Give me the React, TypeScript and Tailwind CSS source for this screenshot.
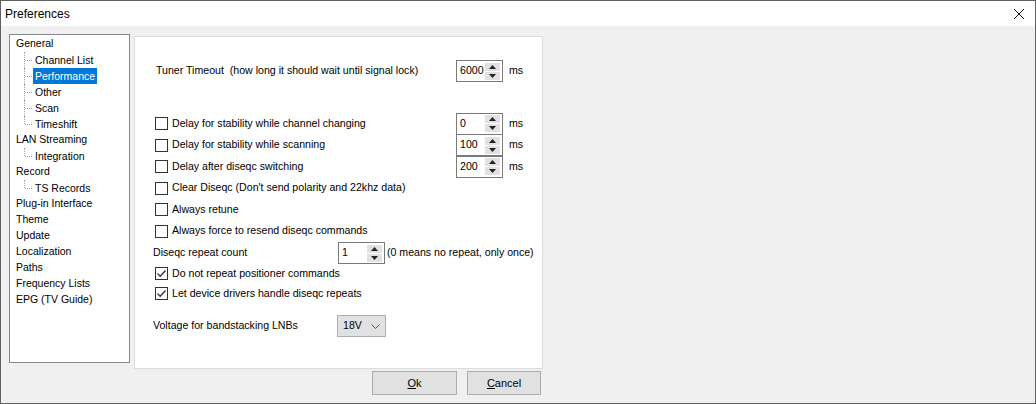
import React from "react";

const tree: { label: string; child?: boolean; last?: boolean; selected?: boolean }[] = [
  { label: "General" },
  { label: "Channel List", child: true },
  { label: "Performance", child: true, selected: true },
  { label: "Other", child: true },
  { label: "Scan", child: true },
  { label: "Timeshift", child: true, last: true },
  { label: "LAN Streaming" },
  { label: "Integration", child: true, last: true },
  { label: "Record" },
  { label: "TS Records", child: true, last: true },
  { label: "Plug-in Interface" },
  { label: "Theme" },
  { label: "Update" },
  { label: "Localization" },
  { label: "Paths" },
  { label: "Frequency Lists" },
  { label: "EPG (TV Guide)" },
];

function SpinArrows() {
  return (
    <div className="flex flex-col gap-px mr-[2px]">
      <div className="w-[15px] h-[8px] bg-[#e1e1e1] flex items-center justify-center">
        <svg width="7" height="4" viewBox="0 0 7 4">
          <path d="M0 4 L3.5 0 L7 4 Z" fill="#222" />
        </svg>
      </div>
      <div className="w-[15px] h-[8px] bg-[#e1e1e1] flex items-center justify-center">
        <svg width="7" height="4" viewBox="0 0 7 4">
          <path d="M0 0 L3.5 4 L7 0 Z" fill="#222" />
        </svg>
      </div>
    </div>
  );
}

function Spin({ value }: { value: string }) {
  return (
    <div className="w-[47px] h-[22px] bg-white border border-[#7a7a7a] flex items-center justify-between shrink-0">
      <span className="pl-[3px]">{value}</span>
      <SpinArrows />
    </div>
  );
}

function Check({ checked }: { checked?: boolean }) {
  return (
    <div className="w-[13px] h-[13px] border border-[#333] bg-white shrink-0 flex items-center justify-center">
      {checked && (
        <svg width="11" height="11" viewBox="0 0 11 11">
          <path d="M1.5 5.5 L4.2 8.2 L9.5 2.5" fill="none" stroke="#333" strokeWidth="1.3" />
        </svg>
      )}
    </div>
  );
}

function CheckRow({ label, checked }: { label: string; checked?: boolean }) {
  return (
    <div className="flex items-center pl-[20px]">
      <Check checked={checked} />
      <span className="ml-[4px]">{label}</span>
    </div>
  );
}

export default function App() {
  return (
    <div
      className="w-[1036px] h-[404px] border border-[#5f5f5f] flex flex-col bg-[#f0f0f0] text-black overflow-hidden"
      style={{ fontFamily: '"Liberation Sans", Arial, sans-serif' }}
    >
      <div className="h-[25px] bg-white flex items-center justify-between shrink-0">
        <span className="pl-[4px] text-[12px]">Preferences</span>
        <svg width="12" height="12" viewBox="0 0 12 12" className="mr-[10px]">
          <path d="M1 1 L11 11 M11 1 L1 11" stroke="#111" strokeWidth="1" />
        </svg>
      </div>

      <div className="flex pl-[8px] pt-[8px]">
        <div className="w-[121px] h-[329px] bg-white border border-[#828790] pt-px text-[10.5px]">
          {tree.map((t) => (
            <div key={t.label} className="h-[16px] flex items-center">
              {t.child ? (
                <>
                  <div className="relative w-[23px] h-[16px] shrink-0">
                    <div
                      className={
                        "absolute left-[14px] top-0 border-l border-dotted border-[#a0a0a0] " +
                        (t.last ? "h-[8px]" : "h-[16px]")
                      }
                    />
                    <div className="absolute left-[15px] top-[8px] w-[7px] border-t border-dotted border-[#a0a0a0]" />
                  </div>
                  <span
                    className={
                      "h-[16px] leading-[16px] px-[2px] " +
                      (t.selected ? "bg-[#0078d7] text-white" : "")
                    }
                  >
                    {t.label}
                  </span>
                </>
              ) : (
                <span className="pl-[6px]">{t.label}</span>
              )}
            </div>
          ))}
        </div>

        <div className="ml-[4px] mt-[2px] flex flex-col">
          <div className="w-[409px] h-[333px] bg-white border border-[#dcdcdc] text-[10.6px] pt-[23px]">
            <div className="h-[22px] flex items-center">
              <span className="pl-[21px] w-[321px] shrink-0">Tuner Timeout&nbsp; (how long it should wait until signal lock)</span>
              <Spin value="6000" />
              <span className="ml-[6px]">ms</span>
            </div>

            <div className="mt-[31px]">
              {[
                ["Delay for stability while channel changing", "0"],
                ["Delay for stability while scanning", "100"],
                ["Delay after diseqc switching", "200"],
              ].map(([label, v]) => (
                <div key={label} className="h-[21.5px] flex items-center">
                  <div className="w-[321px] shrink-0">
                    <CheckRow label={label} />
                  </div>
                  <Spin value={v} />
                  <span className="ml-[6px]">ms</span>
                </div>
              ))}
              {[
                "Clear Diseqc (Don't send polarity and 22khz data)",
                "Always retune",
                "Always force to resend diseqc commands",
              ].map((label) => (
                <div key={label} className="h-[21.5px] flex items-center">
                  <CheckRow label={label} />
                </div>
              ))}
            </div>

            <div className="h-[22px] flex items-center">
              <span className="pl-[18px] w-[203px] shrink-0">Diseqc repeat count</span>
              <Spin value="1" />
              <span className="ml-[2px]">(0 means no repeat, only once)</span>
            </div>

            <div className="h-[20px] flex items-center">
              <CheckRow label="Do not repeat positioner commands" checked />
            </div>
            <div className="h-[20px] flex items-center">
              <CheckRow label="Let device drivers handle diseqc repeats" checked />
            </div>

            <div className="h-[22px] flex items-center mt-[11px]">
              <span className="pl-[18px] w-[202px] shrink-0">Voltage for bandstacking LNBs</span>
              <div className="w-[49px] h-[22px] bg-[#e1e1e1] border border-[#adadad] flex items-center justify-between px-[5px]">
                <span>18V</span>
                <svg width="9" height="5" viewBox="0 0 9 5">
                  <path d="M0.5 0.5 L4.5 4.5 L8.5 0.5" fill="none" stroke="#555" strokeWidth="1" />
                </svg>
              </div>
            </div>
          </div>

          <div className="flex mt-[2px] text-[11px]">
            <button className="ml-[238px] w-[85px] h-[24px] bg-[#e1e1e1] border border-[#adadad] flex items-center justify-center">
              <span><span className="underline">O</span>k</span>
            </button>
            <button className="ml-[10px] w-[74px] h-[24px] bg-[#e1e1e1] border border-[#adadad] flex items-center justify-center">
              <span><span className="underline">C</span>ancel</span>
            </button>
          </div>
        </div>
      </div>
    </div>
  );
}
